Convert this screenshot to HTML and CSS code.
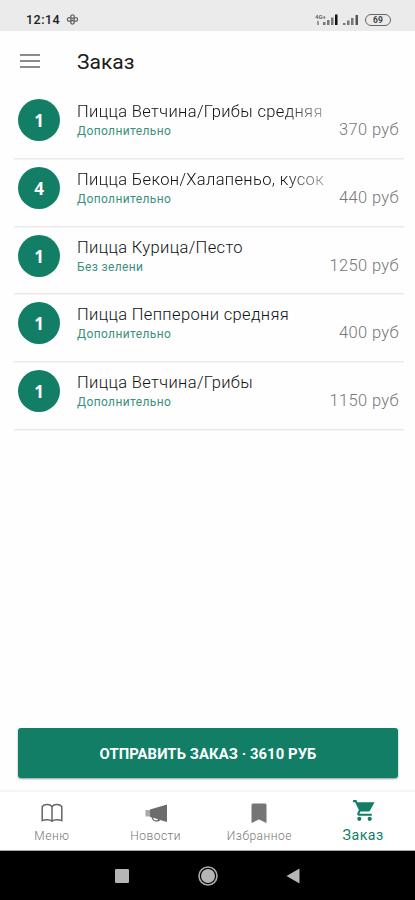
FILE: index.html
```html
<!DOCTYPE html>
<html lang="ru">
<head>
<meta charset="utf-8">
<title>Заказ</title>
<link rel="stylesheet" href="styles.css">
</head>
<body>
<div class="status">
  <span class="clock">12:14</span>
  <svg class="flower" width="13" height="13" viewBox="0 0 13 13" fill="none" stroke="#666" stroke-width="1.3"><circle cx="6.500" cy="3.700" r="1.800"/><circle cx="3.200" cy="6.500" r="1.800"/><circle cx="9.800" cy="6.500" r="1.800"/><circle cx="6.500" cy="9.300" r="1.800"/></svg>
  <div class="signals">
    <span class="net"><span>4G+</span><i></i></span>
    <svg class="bars" width="15" height="11" viewBox="0 0 15 11"><path fill="#777" d="M0 8h2.500v3H0zM4 6h2.500v5H4zM8 3.500h2.500V11H8z"/><path fill="#111" d="M12 .5h2.500V11H12z"/></svg>
    <svg class="bars second" width="16" height="11" viewBox="0 0 16 11"><path fill="#777" d="M0 9h2.500v2H0zM4 6.500h2.500V11H4zM8 4h2.500v7H8z"/><path fill="#555" d="M12.500 1H15v10h-2.500z"/></svg>
    <span class="battery">69</span>
  </div>
</div>
<header class="appbar">
  <div class="burger"><i></i><i></i><i></i></div>
  <h1>Заказ</h1>
</header>
<main class="list">
  <div class="row"><span class="qty">1</span><div class="item"><div class="name fade">Пицца Ветчина/Грибы средняя</div><div class="note">Дополнительно</div></div><span class="price">370 руб</span></div>
  <div class="row"><span class="qty">4</span><div class="item"><div class="name fade">Пицца Бекон/Халапеньо, кусок</div><div class="note">Дополнительно</div></div><span class="price">440 руб</span></div>
  <div class="row"><span class="qty">1</span><div class="item"><div class="name">Пицца Курица/Песто</div><div class="note">Без зелени</div></div><span class="price">1250 руб</span></div>
  <div class="row"><span class="qty">1</span><div class="item"><div class="name">Пицца Пепперони средняя</div><div class="note">Дополнительно</div></div><span class="price">400 руб</span></div>
  <div class="row"><span class="qty">1</span><div class="item"><div class="name">Пицца Ветчина/Грибы</div><div class="note">Дополнительно</div></div><span class="price">1150 руб</span></div>
</main>
<div class="action"><button class="send">ОТПРАВИТЬ ЗАКАЗ · 3610 РУБ</button></div>
<nav class="tabs">
  <div class="tab"><svg width="24" height="22" viewBox="0 0 24 22" fill="none" stroke="#666" stroke-width="1.500"><path d="M12 5C10.500 1.800 4.500 1.800 2.200 4.400V18.600C4.800 17.400 10 17.400 12 19.200C14 17.400 19.200 17.400 21.800 18.600V4.400C19.500 1.800 13.500 1.800 12 5V19"/></svg><span>Меню</span></div>
  <div class="tab"><svg width="24" height="22" viewBox="0 0 24 22"><path fill="#aaa" d="M1.500 8H6v6.500H1.500z"/><path fill="#6c6c6c" d="M6 7.500 23 2.500V20L16 17.900C15.500 20.300 8.500 20.800 7.300 15.200L6 14.800zM9 15.700c.8 3.300 4.500 3 5 1.500z"/></svg><span>Новости</span></div>
  <div class="tab"><svg width="24" height="22" viewBox="0 0 24 22"><path fill="#757575" d="M6 1.500h12q1.500 0 1.500 1.500v18L12 17.500 4.500 21V3Q4.500 1.500 6 1.500z"/></svg><span>Избранное</span></div>
  <div class="tab active"><svg width="25" height="25" viewBox="0 0 24 24"><path fill="#117e65" d="M7 18c-1.100 0-1.990.9-1.990 2S5.900 22 7 22s2-.9 2-2-.9-2-2-2zM1 2v2h2l3.600 7.590-1.350 2.450c-.16.280-.250.610-.250.960 0 1.100.9 2 2 2h12v-2H7.420c-.140 0-.250-.110-.250-.250l.03-.120.900-1.630h7.450c.750 0 1.410-.410 1.750-1.030L21.700 4H5.210l-.940-2H1zm16 16c-1.100 0-1.990.9-1.990 2s.89 2 1.990 2 2-.9 2-2-.9-2-2-2z"/></svg><span>Заказ</span></div>
</nav>
<div class="system">
  <svg width="14" height="14" viewBox="0 0 14 14"><rect width="14" height="14" rx="1" fill="#b5b5b5"/></svg>
  <svg width="22" height="22" viewBox="0 0 22 22"><circle cx="11" cy="11" r="9" fill="none" stroke="#aaa" stroke-width="1.600"/><circle cx="11" cy="11" r="7" fill="#b5b5b5"/></svg>
  <svg width="14" height="16" viewBox="0 0 14 16"><path fill="#b5b5b5" d="M13.500.5v15L.5 8z"/></svg>
</div>
</body>
</html>
```
FILE: styles.css
```css
* { box-sizing: border-box; }
body {
  margin: 0;
  width: 415px;
  height: 900px;
  display: flex;
  flex-direction: column;
  overflow: hidden;
  background: #fefefe;
  font-family: Roboto, "Noto Sans", sans-serif;
  color: #222;
}
.status {
  height: 31px;
  flex: none;
  background: #ebebeb;
  display: flex;
  align-items: center;
  padding: 8px 24px 0 26px;
}
.clock { font-size: 12.5px; font-weight: 500; letter-spacing: .5px; width: 40px; }
.signals { margin-left: auto; display: flex; align-items: center; }
.net { font-size: 6px; line-height: 6px; font-weight: 700; color: #666; height: 12px; width: 8px; white-space: nowrap; }
.net span { display: block; }
.net i { display: block; width: 2px; height: 4px; margin: 1px 0 0 2px; background: #999; }
.bars.second { margin-left: 5px; }
.battery {
  width: 26px;
  height: 12px;
  margin-left: 6px;
  border: 1px solid #666;
  border-radius: 6px;
  font-size: 8.5px;
  line-height: 10px;
  font-weight: 700;
  text-align: center;
  color: #444;
}
.appbar { height: 59px; flex: none; display: flex; align-items: center; padding: 2px 20px 0; }
.burger { width: 20px; display: grid; gap: 4px; margin-top: -2px; }
.burger i { height: 2px; background: #8b8b8b; }
h1 { margin: 0 0 0 37px; font-size: 21px; font-weight: 400; line-height: 28px; color: #1c1c1c; }
.list { flex: 1; padding: 0 11px 0 14px; }
.row {
  height: 67.75px;
  display: flex;
  align-items: flex-start;
  padding: 9px 5px 0 4px;
  box-shadow: 0 1px 0 #e9e9e9, 0 2px 0 #f4f4f4;
}
.qty {
  width: 42px;
  height: 42px;
  border-radius: 50%;
  background: #117e65;
  color: #fff;
  font: 700 17px/43px "Open Sans", sans-serif;
  text-align: center;
}
.item { width: 252px; margin-left: 17px; white-space: nowrap; }
.name { font-size: 16.500px; line-height: 22px; font-weight: 300; letter-spacing: .36px; margin-top: 2px; color: #111; }
.fade { width: 252px; mask-image: linear-gradient(to right, #000 205px, transparent 275px); }
.note { font-size: 12px; line-height: 16px; letter-spacing: .38px; color: #3a917b; }
.price { flex: 1; text-align: right; white-space: nowrap; font-size: 16.500px; line-height: 22px; font-weight: 300; letter-spacing: .36px; color: #777; margin-top: 20px; }
.action { flex: none; padding: 0 17px 12px 18px; }
.send {
  display: block;
  width: 100%;
  height: 50px;
  border: 0;
  border-radius: 3px;
  background: #117e65;
  color: #fff;
  font: 700 14.800px/52px Roboto, sans-serif;
  letter-spacing: .08px;
  padding: 0;
  box-shadow: 0 1px 2px rgba(0, 0, 0, .4);
}
.tabs {
  flex: none;
  height: 61px;
  border-top: 2px solid #f5f5f5;
  border-bottom: 1px solid #aaa;
  background: #fff;
  display: grid;
  grid-template-columns: repeat(4, 1fr);
}
.tab { display: flex; flex-direction: column; align-items: center; padding-top: 10px; font-size: 12px; line-height: 16px; letter-spacing: .5px; color: #777; font-weight: 300; }
.tab span { margin-top: 4px; }
.active { padding-top: 6px; color: #117e65; font-size: 14.2px; font-weight: 400; }
.active svg { margin-left: 2px; }
.active span { margin-top: 4px; }
.system { flex: none; height: 49px; background: #000; display: flex; align-items: center; padding-left: 115px; }
.system svg:nth-child(2) { margin-left: 68px; }
.system svg:nth-child(3) { margin-left: 67px; }
```
